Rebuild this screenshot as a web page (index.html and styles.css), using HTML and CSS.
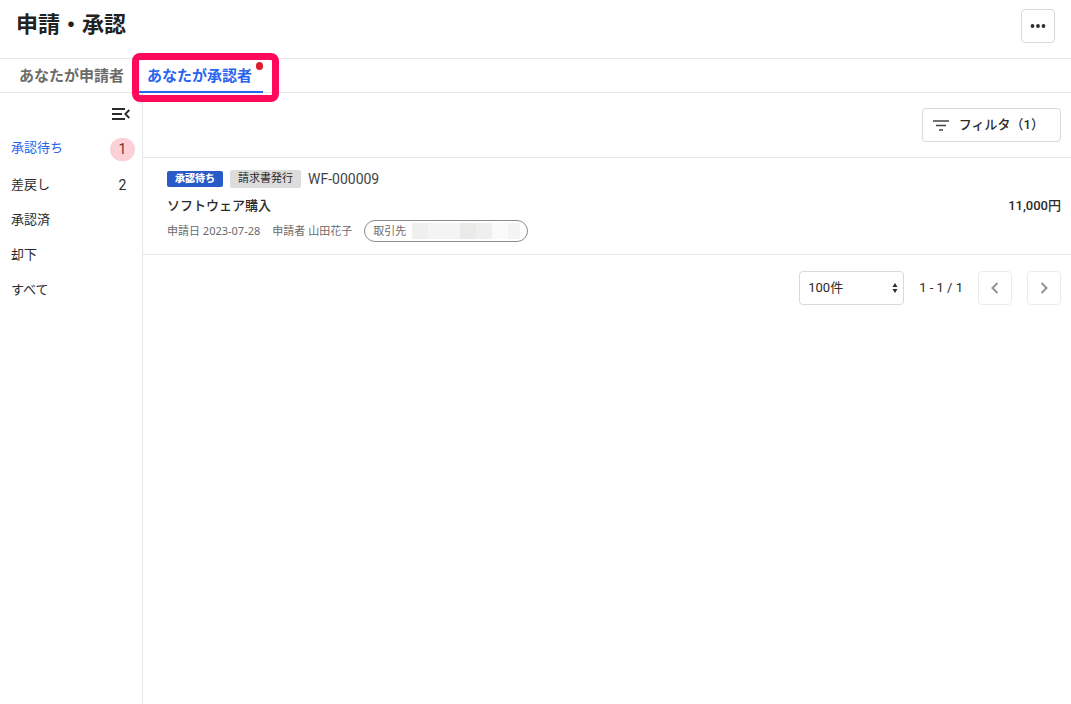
FILE: index.html
```html
<!DOCTYPE html>
<html lang="ja">
<head>
<meta charset="utf-8">
<title>申請・承認</title>
<link rel="stylesheet" href="styles.css">
</head>
<body>
<header class="header">
  <h1 class="title">申請・承認</h1>
  <button class="btn more" type="button" aria-label="メニュー">
    <svg width="16" height="4" viewBox="0 0 16 4" fill="#2b2f33"><circle cx="2.5" cy="2" r="1.900"/><circle cx="8" cy="2" r="1.900"/><circle cx="13.5" cy="2" r="1.900"/></svg>
  </button>
</header>
<nav class="tabs">
  <a class="tab" href="#applicant">あなたが申請者</a>
  <a class="tab active" href="#approver">あなたが承認者<span class="dot"></span><span class="highlight"></span></a>
</nav>
<div class="body">
  <aside class="sidebar">
    <button class="collapse" type="button" aria-label="閉じる">
      <svg width="18" height="12" viewBox="0 0 18 12" fill="none" stroke="#2b2b2b" stroke-width="1.8"><path d="M0 1h13M0 6h10M0 11h13M17.3 2L13.3 6l4 4"/></svg>
    </button>
    <nav class="statuses">
      <a class="status current" href="#waiting">承認待ち<span class="count pill">1</span></a>
      <a class="status" href="#returned">差戻し<span class="count">2</span></a>
      <a class="status" href="#approved">承認済</a>
      <a class="status" href="#rejected">却下</a>
      <a class="status" href="#all">すべて</a>
    </nav>
  </aside>
  <main class="main">
    <div class="toolbar">
      <button class="btn filter" type="button">
        <svg width="16" height="11" viewBox="0 0 16 11" fill="none" stroke="#444" stroke-width="1.7"><path d="M0 1h16M3 5.500h10M6 10h4"/></svg>
        <span>フィルタ（1）</span>
      </button>
    </div>
    <article class="item">
      <div class="labels">
        <span class="tag blue">承認待ち</span>
        <span class="tag gray">請求書発行</span>
        <span class="code">WF-000009</span>
      </div>
      <div class="subject">
        <h2 class="name">ソフトウェア購入</h2>
        <span class="amount">11,000円</span>
      </div>
      <div class="meta">
        <span>申請日 2023-07-28</span>
        <span>申請者 山田花子</span>
        <span class="partner">取引先<span class="mask"><i class="m1"></i><i class="m2"></i><i class="m2"></i><i class="m3"></i><i class="m1"></i><i class="m4"></i><i class="m5"></i></span></span>
      </div>
    </article>
    <div class="pager">
      <div class="select-wrap">
        <select class="size" aria-label="表示件数"><option>100件</option></select>
        <svg class="arrows" width="6" height="10" viewBox="0 0 6 10" fill="#2b2b2b"><path d="M3 0l2.500 4h-5zM3 10l2.500-4h-5z"/></svg>
      </div>
      <span class="range">1 - 1 / 1</span>
      <button class="btn page" type="button" aria-label="前へ"><svg width="8" height="12" viewBox="0 0 8 12" fill="none" stroke="#949494" stroke-width="2"><path d="M6.500 1l-5 5 5 5"/></svg></button>
      <button class="btn page" type="button" aria-label="次へ"><svg width="8" height="12" viewBox="0 0 8 12" fill="none" stroke="#949494" stroke-width="2"><path d="M1.500 1l5 5-5 5"/></svg></button>
    </div>
  </main>
</div>
</body>
</html>
```
FILE: styles.css
```css
* { box-sizing: border-box; }
body {
  margin: 0;
  min-height: 100vh;
  display: flex;
  flex-direction: column;
  background: #fff;
  color: #2b2b2b;
  font: 13px/20px Roboto, "Noto Sans CJK JP", sans-serif;
}
a { color: inherit; text-decoration: none; }
button, select { font: inherit; color: inherit; }
svg { display: block; }
.btn {
  display: flex;
  align-items: center;
  justify-content: center;
  height: 34px;
  padding: 0;
  background: #fff;
  border: 1px solid #d9d9dc;
  border-radius: 4px;
}
.header {
  display: flex;
  justify-content: space-between;
  align-items: flex-start;
  padding: 9px 16px 15px;
  border-bottom: 1px solid #e6e6e6;
}
.title { margin: 0; font-size: 22px; line-height: 32px; font-weight: 700; color: #222; }
.more { width: 34px; }
.tabs {
  display: flex;
  gap: 4px;
  padding-left: 8px;
  height: 34px;
  border-bottom: 1px solid #e6e6e6;
}
.tab {
  position: relative;
  padding: 0 11px;
  height: 34px;
  font-size: 15px;
  line-height: 34px;
  font-weight: 700;
  color: #6b6b6b;
}
.tab.active { padding-left: 8px; color: #2864f0; border-bottom: 2px solid #2864f0; }
.dot {
  position: absolute;
  top: 3px;
  right: 0;
  width: 7px;
  height: 8px;
  border-radius: 4px;
  background: #dc1e32;
}
.highlight {
  position: absolute;
  inset: -6px -16px -11px -7px;
  border: 7px solid #ff0a5a;
  border-radius: 8px;
  pointer-events: none;
}
.body { display: flex; flex: 1; }
.sidebar { width: 143px; flex: none; border-right: 1px solid #e6e6e6; }
.collapse {
  display: block;
  margin: 15px 12px 0 auto;
  padding: 0;
  border: 0;
  background: none;
}
.statuses { display: flex; flex-direction: column; gap: 15px; padding: 18px 7px 0 11px; }
.status { display: flex; justify-content: space-between; align-items: center; height: 20px; }
.status.current { color: #2864f0; height: 22px; align-items: flex-start; }
.count { width: 25px; text-align: center; font-size: 14px; }
.pill {
  height: 23px;
  line-height: 23px;
  border-radius: 12px;
  background: #fbd1d7;
  color: #6e3030;
}
.main { flex: 1; min-width: 0; }
.toolbar {
  display: flex;
  justify-content: flex-end;
  padding: 15px 10px;
  border-bottom: 1px solid #e6e6e6;
}
.filter { gap: 10px; padding: 0 16px 0 10px; font-size: 13px; font-weight: 500; }
.item { padding: 11px 10px 12px 24px; border-bottom: 1px solid #e6e6e6; }
.labels { display: flex; align-items: center; gap: 7px; height: 20px; }
.tag { padding: 0 8px; font-size: 11px; border-radius: 2px; }
.blue { line-height: 16px; font-size: 10px; font-weight: 900; color: #fff; background: #285ac8; }
.gray { line-height: 18px; background: #dcdcdc; }
.code { font-size: 14px; color: #444; }
.subject { display: flex; justify-content: space-between; align-items: center; margin-top: 7px; }
.name { margin: 0; font-size: 13px; line-height: 20px; font-weight: 500; }
.amount { font-size: 13px; font-weight: 500; }
.meta {
  display: flex;
  align-items: center;
  gap: 12px;
  margin-top: 4px;
  font-family: "Noto Sans", "Noto Sans CJK JP", sans-serif;
  font-size: 11px;
  color: #6b6b6b;
}
.partner {
  display: flex;
  align-items: center;
  gap: 6px;
  height: 22px;
  padding: 0 7px 0 8px;
  border: 1px solid #8c8c8c;
  border-radius: 11px;
}
.mask { display: flex; }
.mask i { width: 16px; height: 16px; }
.mask i:last-child { width: 12px; }
.m1 { background: #eeefee; }
.m2 { background: #f3f4f3; }
.m3 { background: #eaeae8; }
.m4 { background: #fafafa; }
.m5 { background: #f4f4f4; }
.pager { display: flex; justify-content: flex-end; align-items: center; gap: 15px; padding: 16px 10px; }
.select-wrap { position: relative; }
.size {
  display: block;
  appearance: none;
  width: 105px;
  height: 34px;
  padding: 0 8px;
  font-size: 13px;
  background: #fff;
  border: 1px solid #d9d9dc;
  border-radius: 4px;
}
.arrows { position: absolute; right: 6px; top: 12px; pointer-events: none; }
.range { font-size: 13px; }
.page { width: 34px; border-color: #ebebeb; }
```
